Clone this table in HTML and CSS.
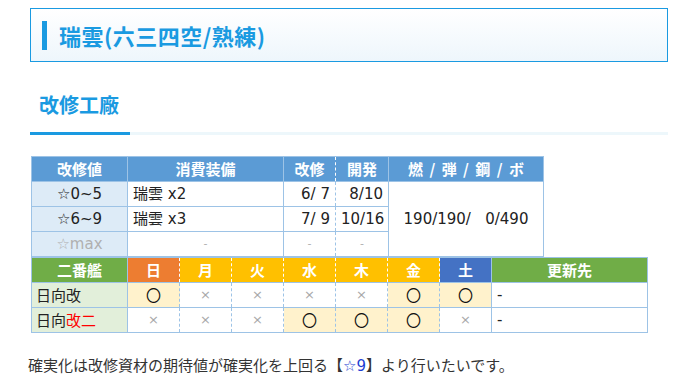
FILE: index.html
```html
<!DOCTYPE html>
<html lang="ja">
<head>
<meta charset="utf-8">
<title>瑞雲(六三四空/熟練)</title>
<link rel="stylesheet" href="styles.css">
</head>
<body>
<div class="page">
  <div class="title-box">
    <span class="title-bar"></span>
    <h1 class="title">瑞雲(六三四空/熟練)</h1>
  </div>

  <div class="section">
    <h2 class="section-title">改修工廠</h2>
    <div class="underline"><span class="ul-main"></span><span class="ul-rest"></span></div>
  </div>

  <table class="tbl tbl-top">
    <colgroup>
      <col class="c96"><col class="c156"><col class="c52"><col class="c53"><col class="c155">
    </colgroup>
    <tr class="hd-blue">
      <th>改修値</th>
      <th>消費装備</th>
      <th class="dash-r">改修</th>
      <th class="dash-l">開発</th>
      <th class="wide">燃 / 弾 / 鋼 / ボ</th>
    </tr>
    <tr>
      <td class="lbl-blue">☆0~5</td>
      <td class="left">瑞雲 x2</td>
      <td class="num dash-r">6/ 7</td>
      <td class="num dash-l">8/10</td>
      <td class="res" rowspan="3">190/190/   0/490</td>
    </tr>
    <tr>
      <td class="lbl-blue">☆6~9</td>
      <td class="left">瑞雲 x3</td>
      <td class="num dash-r">7/ 9</td>
      <td class="num dash-l">10/16</td>
    </tr>
    <tr>
      <td class="lbl-blue muted">☆max</td>
      <td class="muted small">-</td>
      <td class="muted small dash-r">-</td>
      <td class="muted small dash-l">-</td>
    </tr>
  </table>

  <table class="tbl tbl-bottom">
    <colgroup>
      <col class="c96"><col class="c52"><col class="c52"><col class="c52"><col class="c52"><col class="c52"><col class="c52"><col class="c52"><col class="c156">
    </colgroup>
    <tr class="hd-days">
      <th class="hd-green">二番艦</th>
      <th class="day sun">日</th>
      <th class="day wk">月</th>
      <th class="day wk">火</th>
      <th class="day wk">水</th>
      <th class="day wk">木</th>
      <th class="day wk">金</th>
      <th class="day sat">土</th>
      <th class="hd-green">更新先</th>
    </tr>
    <tr>
      <td class="lbl-green">日向改</td>
      <td class="d ok">〇</td>
      <td class="d ng">×</td>
      <td class="d ng">×</td>
      <td class="d ng">×</td>
      <td class="d ng">×</td>
      <td class="d ok">〇</td>
      <td class="d ok">〇</td>
      <td class="left">-</td>
    </tr>
    <tr>
      <td class="lbl-green">日向<span class="red">改二</span></td>
      <td class="d ng">×</td>
      <td class="d ng">×</td>
      <td class="d ng">×</td>
      <td class="d ok">〇</td>
      <td class="d ok">〇</td>
      <td class="d ok">〇</td>
      <td class="d ng">×</td>
      <td class="left">-</td>
    </tr>
  </table>

  <p class="note">確実化は改修資材の期待値が確実化を上回る【<span class="star">☆9</span>】より行いたいです。</p>
</div>
</body>
</html>
```

FILE: styles.css
```css
html, body {
  margin: 0;
  padding: 0;
  background: #fff;
}

body {
  font-family: "DejaVu Sans", "Noto Sans CJK JP", sans-serif;
  color: #222;
}

.page {
  padding: 8px 0 0 28px;
  width: 640px;
}

.title-box {
  margin-left: 2px;
  box-sizing: border-box;
  width: 638px;
  height: 54px;
  border: 1px solid #1a9ae1;
  background: linear-gradient(to bottom, #ffffff 0%, #eef6fc 100%);
  display: flex;
  align-items: center;
  padding-left: 11px;
}

.title-bar {
  display: block;
  width: 5px;
  height: 29px;
  background: #1a9ae1;
  margin-right: 12px;
}

.title {
  margin: 0;
  font-family: "Noto Sans CJK JP", sans-serif;
  font-size: 22px;
  letter-spacing: 0.5px;
  line-height: 30px;
  font-weight: bold;
  color: #1a9ae1;
}

.section {
  margin-left: 2px;
  width: 638px;
  margin-top: 29px;
}

.section-title {
  margin: 0;
  padding-left: 9px;
  font-family: "Noto Sans CJK JP", sans-serif;
  font-size: 20px;
  line-height: 28px;
  font-weight: bold;
  color: #1a9ae1;
}

.underline {
  display: flex;
  margin-top: 13px;
  height: 3px;
}

.ul-main {
  width: 100px;
  background: #1a9ae1;
}

.ul-rest {
  flex: 1;
  background: #edf7fb;
}

.tbl {
  border-collapse: collapse;
  table-layout: fixed;
  margin-left: 3px;
  font-size: 15px;
}

.tbl-top {
  width: 513px;
  margin-top: 21px;
}

.tbl-bottom {
  width: 617px;
}

.c96 { width: 96px; }
.c156 { width: 156px; }
.c155 { width: 155px; }
.c52 { width: 52px; }
.c53 { width: 53px; }

.tbl th, .tbl td {
  border: 1px solid #9dc3e6;
  padding: 0 5px;
  height: 24px;
  line-height: 24px;
  text-align: center;
  white-space: pre;
  font-weight: normal;
}

.tbl th {
  color: #fff;
  font-weight: bold;
  font-family: "Noto Sans CJK JP", sans-serif;
  font-size: 15px;
}

.tbl tr.hd-blue th {
  background: #5b9bd5;
  height: 23px;
}

.tbl tr.hd-blue th.wide {
  word-spacing: 3px;
}

.tbl tr.hd-blue th.dash-r { border-right: 1px dashed #fff; }
.tbl tr.hd-blue th.dash-l { border-left: 1px dashed #fff; }

.tbl td.dash-r { border-right: 1px dashed #9dc3e6; }
.tbl td.dash-l { border-left: 1px dashed #9dc3e6; }

.tbl td.lbl-blue {
  background: #ddebf7;
}

.tbl td.left {
  text-align: left;
}

.tbl td.num {
  text-align: right;
}

.tbl td.muted {
  color: #b0b0b0;
}

.tbl td.small {
  font-size: 11px;
}

.tbl th.hd-green {
  background: #70ad47;
}

.tbl th.day {
  border-left: 1px dashed #fff;
  border-right: 1px dashed #fff;
}

.tbl th.sun { background: #ed7d31; }
.tbl th.wk { background: #ffc000; }
.tbl th.sat { background: #4472c4; }

.tbl td.lbl-green {
  background: #e2efda;
  text-align: left;
  padding-left: 4px;
  font-family: "Noto Sans CJK JP", sans-serif;
  font-size: 15px;
  color: #222;
}

.red {
  color: #ff0000;
}

.tbl td.d {
  border-left: 1px dashed #9dc3e6;
  border-right: 1px dashed #9dc3e6;
  padding: 0;
}

.tbl td.ok {
  background: #fff2cc;
  font-family: "Noto Sans CJK JP", sans-serif;
  font-size: 15px;
  color: #111;
}

.tbl td.ng {
  color: #a8a8a8;
  font-size: 13px;
}

.note {
  margin: 20px 0 0 0;
  font-family: "Noto Sans CJK JP", sans-serif;
  font-size: 15px;
  line-height: 24px;
  color: #333;
}

.star {
  color: #1d3fd3;
  font-family: "DejaVu Sans", "Noto Sans CJK JP", sans-serif;
}
```
